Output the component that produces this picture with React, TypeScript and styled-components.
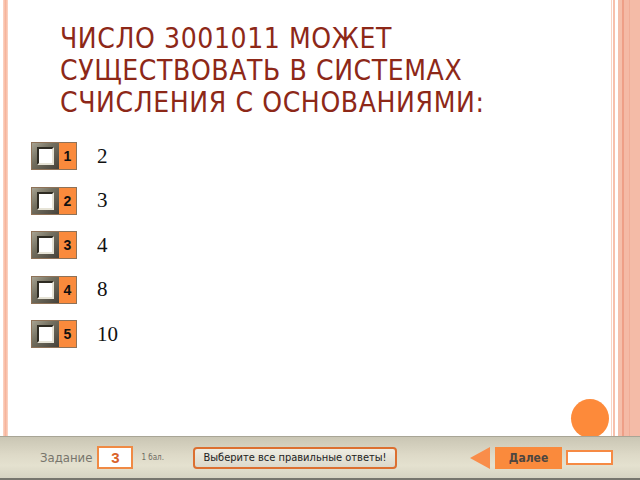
import React from 'react';
import styled, { createGlobalStyle } from 'styled-components';

const GlobalStyle = createGlobalStyle`
  html, body {
    margin: 0;
    padding: 0;
    background: #ffffff;
  }
  #root {
    width: 640px;
    height: 480px;
    overflow: hidden;
  }
`;

const Page = styled.div`
  position: relative;
  width: 640px;
  height: 480px;
  display: flex;
  flex-direction: column;
  background: #ffffff;
`;

const Slide = styled.div`
  flex: 1;
  display: flex;
  min-height: 0;
`;

const LeftEdge = styled.div`
  width: 5px;
  margin-left: 3px;
  background: linear-gradient(to right, #fcd6c6 0%, #f6b49c 50%, #fcd6c6 100%);
`;

const RightEdge = styled.div`
  width: 29px;
  display: flex;
`;

const Line = styled.div<{ $w: number; $c: string; $ml?: number }>`
  width: ${(p) => p.$w}px;
  margin-left: ${(p) => p.$ml ?? 0}px;
  background: ${(p) => p.$c};
`;

const Band = styled.div`
  flex: 1;
  background: linear-gradient(
    to right,
    #f5bfab 0px,
    #f5bfab 4px,
    #ee9f87 4px,
    #ee9f87 6px,
    #f4baa6 6px,
    #f4baa6 11px,
    #f0ad97 11px,
    #f0ad97 12px,
    #f4bba7 12px
  );
`;

const Content = styled.div`
  flex: 1;
  padding: 23px 0 0 52px;
  display: flex;
  flex-direction: column;
`;

const Title = styled.h1`
  margin: 0;
  font-family: 'DejaVu Sans Condensed', 'DejaVu Sans', sans-serif;
  font-stretch: condensed;
  font-weight: normal;
  font-size: 28px;
  letter-spacing: 0.6px;
  line-height: 32px;
  color: #8d2818;
  text-transform: uppercase;
`;

const Answers = styled.div`
  margin-top: 23px;
  margin-left: -29px;
  display: flex;
  flex-direction: column;
  gap: 16.5px;
`;

const AnswerRow = styled.div`
  display: flex;
  align-items: center;
  height: 28px;
`;

const Check = styled.div`
  display: flex;
  width: 46px;
  height: 28px;
  border: 1px solid #8e7258;
  box-sizing: border-box;
`;

const Frame = styled.div`
  width: 27px;
  height: 100%;
  display: flex;
  align-items: center;
  justify-content: center;
  background: linear-gradient(135deg, #a7a392 0%, #747060 40%, #45413a 100%);
`;

const Inner = styled.div`
  width: 17px;
  height: 18px;
  background: #ffffff;
  border-top: 2px solid #2e2b22;
  border-left: 2px solid #2e2b22;
  border-right: 2px solid #e6e3d6;
  border-bottom: 2px solid #e6e3d6;
  box-sizing: border-box;
`;

const Num = styled.div`
  flex: 1;
  background: #fa8a3c;
  display: flex;
  align-items: center;
  justify-content: center;
  font-family: 'Liberation Sans', Arial, sans-serif;
  font-weight: bold;
  font-size: 14px;
  color: #111;
`;

const AnswerText = styled.span`
  margin-left: 20px;
  font-family: 'Liberation Serif', 'Times New Roman', serif;
  font-size: 21px;
  color: #111;
`;

const Dot = styled.div`
  position: absolute;
  left: 571px;
  top: 399px;
  width: 38px;
  height: 39px;
  border-radius: 50%;
  background: #fd8a3a;
`;

const BottomBar = styled.div`
  position: relative;
  height: 44px;
  box-sizing: border-box;
  border-top: 1px solid #a8a596;
  border-bottom: 2px solid #77766e;
  background: linear-gradient(to bottom, #cac6b4 0%, #dedac8 45%, #e4e1cf 70%, #d6d3c2 100%);
  display: flex;
  align-items: center;
  padding: 0 0 0 40px;
  font-family: 'DejaVu Sans Condensed', 'DejaVu Sans', sans-serif;
  font-stretch: condensed;
`;

const TaskLabel = styled.span`
  font-size: 13px;
  color: #77756c;
`;

const TaskNum = styled.div`
  margin-left: 5px;
  width: 36px;
  height: 23px;
  box-sizing: border-box;
  border: 2px solid #f08a44;
  background: #ffffff;
  display: flex;
  align-items: center;
  justify-content: center;
  font-family: 'Liberation Sans', Arial, sans-serif;
  font-weight: bold;
  font-size: 15px;
  color: #d9622a;
`;

const Points = styled.span`
  margin-left: 8px;
  font-size: 8px;
  color: #6e6c64;
`;

const Hint = styled.div`
  margin-left: 29px;
  width: 204px;
  height: 22px;
  box-sizing: border-box;
  border: 2px solid #dc6f30;
  border-radius: 4px;
  background: linear-gradient(to bottom, #eeece2, #dcd9cb);
  display: flex;
  align-items: center;
  justify-content: center;
  font-size: 11px;
  color: #222;
`;

const Spacer = styled.div`
  flex: 1;
`;

const BackArrow = styled.div`
  width: 0;
  height: 0;
  border-top: 11px solid transparent;
  border-bottom: 11px solid transparent;
  border-right: 20px solid #f98d4a;
  margin-right: 5px;
`;

const NextButton = styled.div`
  width: 67px;
  height: 22px;
  background: #fa8a3c;
  display: flex;
  align-items: center;
  justify-content: center;
  font-weight: bold;
  font-size: 12px;
  color: #4e4640;
`;

const Blank = styled.div`
  margin-left: 4px;
  margin-right: 27px;
  width: 47px;
  height: 15px;
  box-sizing: border-box;
  border: 2px solid #f68a44;
  background: #ffffff;
`;

const answers = ['2', '3', '4', '8', '10'];

const App: React.FC = () => {
  return (
    <Page>
      <GlobalStyle />
      <Slide>
        <LeftEdge />
        <Content>
          <Title>
            Число 3001011 может
            <br />
            существовать в системах
            <br />
            счисления с основаниями:
          </Title>
          <Answers>
            {answers.map((a, i) => (
              <AnswerRow key={a}>
                <Check>
                  <Frame>
                    <Inner />
                  </Frame>
                  <Num>{i + 1}</Num>
                </Check>
                <AnswerText>{a}</AnswerText>
              </AnswerRow>
            ))}
          </Answers>
        </Content>
        <RightEdge>
          <Line $w={1} $c="#fad3c4" />
          <Line $w={2} $c="#f7c0ac" $ml={1} />
          <Line $w={3} $c="#ffffff" />
          <Band />
        </RightEdge>
      </Slide>
      <Dot />
      <BottomBar>
        <TaskLabel>Задание</TaskLabel>
        <TaskNum>3</TaskNum>
        <Points>1 бал.</Points>
        <Hint>Выберите все правильные ответы!</Hint>
        <Spacer />
        <BackArrow />
        <NextButton>Далее</NextButton>
        <Blank />
      </BottomBar>
    </Page>
  );
};

export default App;
